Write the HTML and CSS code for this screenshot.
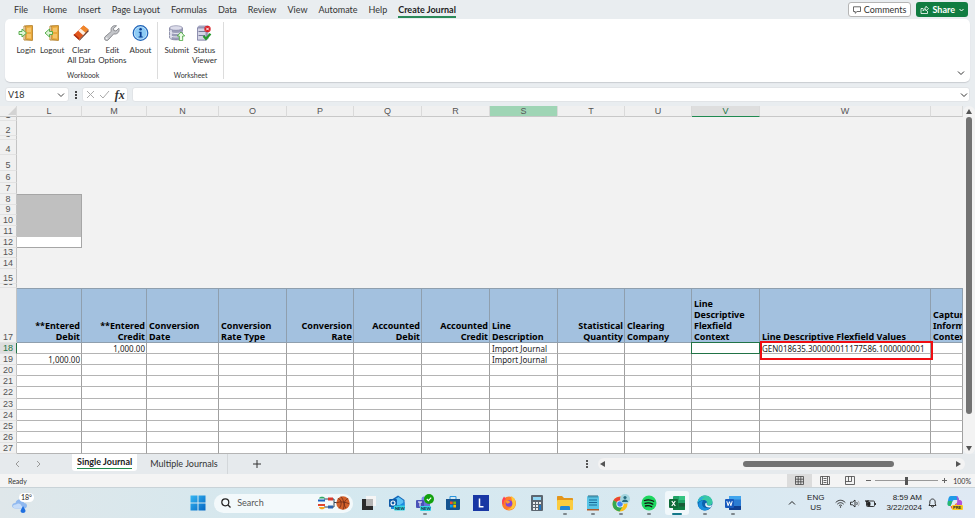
FILE: index.html
```
<!DOCTYPE html>
<html lang="en">
<head>
    <meta charset="UTF-8">
    <meta name="viewport" content="width=device-width, initial-scale=1.0">
    <title>Create Journal - Excel</title>
    <link rel="stylesheet" href="styles.css">
</head>
<body>
    <header class="menu-bar">
        <nav class="menu">
            <a href="#" class="file">File</a>
            <a href="#">Home</a>
            <a href="#">Insert</a>
            <a href="#">Page Layout</a>
            <a href="#">Formulas</a>
            <a href="#">Data</a>
            <a href="#">Review</a>
            <a href="#">View</a>
            <a href="#">Automate</a>
            <a href="#">Help</a>
            <a href="#" class="active">Create Journal</a>
        </nav>
        <div class="menu-actions">
            <button class="comments">
                <svg width="8" height="8" viewBox="0 0 8 8" fill="none" stroke="#444"><path d="M.5.8h7v4.700H4L2.200 7.300V5.500H.5z" stroke-width=".8"/></svg>
                Comments
            </button>
            <button class="share">
                <svg width="9" height="9" viewBox="0 0 9 9" fill="none" stroke="#fff" stroke-width=".8"><path d="M3 3.500H1v5h6.500V6M3 6c0-2 1-3 3-3V1.200L8.500 3.700 6 6V4.500C4.500 4.500 3.700 5 3 6z"/></svg>
                Share
                <svg class="share-arrow" width="5" height="4" viewBox="0 0 5 4" fill="none" stroke="#fff"><path d="M.5 1l2 2 2-2"/></svg>
            </button>
        </div>
    </header>

    <section class="ribbon">
        <div class="group">
            <div class="tools">
                <button>
                    <svg width="16" height="16" viewBox="0 0 16 16"><path d="M6 1h8v14H6z" fill="#fff" stroke="#b9852c"/><path d="M7.500 1L14.500.5v15l-7-1.200z" fill="#e9a93c" stroke="#a8741f" stroke-width=".6"/><path d="M9 3l4-.4v4.500H9zM9 9h4v4.500l-4-.6z" fill="#f5c469"/><path d="M1 6.500h3V4l4.500 4L4 12V9.500H1z" fill="#dff5d8" stroke="#4aa83f" stroke-width=".9"/></svg>
                    <span>Login</span>
                </button>
                <button>
                    <svg width="16" height="16" viewBox="0 0 16 16"><path d="M6 1h8v14H6z" fill="#fff" stroke="#b9852c"/><path d="M7.500 1L14.500.5v15l-7-1.200z" fill="#e9a93c" stroke="#a8741f" stroke-width=".6"/><path d="M9 3l4-.4v4.500H9zM9 9h4v4.500l-4-.6z" fill="#f5c469"/><path d="M8.500 6.500h-3V4L1 8l4.500 4V9.500h3z" fill="#dff5d8" stroke="#4aa83f" stroke-width=".9"/></svg>
                    <span>Logout</span>
                </button>
                <button>
                    <svg width="16" height="16" viewBox="0 0 16 16"><path d="M.5 10L10.500.5l5 4L6 15z" fill="#e2571c"/><path d="M10.500.5l5 4-3.500 3.700-5-4.300z" fill="#f0862a"/><path d="M7.500 3.500l5 4.300-2.300 2.500-5-4.500z" fill="#fff0e0"/><path d="M.5 10l5.500 5v-2L1.500 9z" fill="#a92c10"/><path d="M6 15l9.500-10.500v2L6.500 15.800z" fill="#6a3b2c"/></svg>
                    <span>Clear<br>All Data</span>
                </button>
                <button>
                    <svg width="16" height="16" viewBox="0 0 16 16"><path d="M14.800 3.200L12 6 9.800 5.500 9.500 3.500 12.500.8C10 0 7.200 1.600 7 4.500c0 .8.100 1.300.3 1.800L1 11.800c-1 1-.6 2.500.2 3.200.9.800 2.200.8 3-.1L9.700 8.900c3.500.9 6.400-2.300 5.100-5.700z" fill="#c3c5c9" stroke="#77797e" stroke-width=".8"/><circle cx="2.800" cy="13.200" r=".8" fill="#fff"/></svg>
                    <span>Edit<br>Options</span>
                </button>
                <button>
                    <svg width="17" height="16" viewBox="0 0 17 16"><circle cx="8.500" cy="8" r="7.300" fill="#cfeafc" stroke="#1c62b8" stroke-width="1.200"/><circle cx="8.500" cy="8" r="6" fill="#8dcbf5"/><circle cx="8.600" cy="4.300" r="1.300" fill="#0b3f96"/><path d="M6.800 6.700h2.800v4.800h1.200v1H6.600v-1h1.200V7.700h-1z" fill="#0b3f96"/></svg>
                    <span>About</span>
                </button>
            </div>
            <div class="group-name">Workbook</div>
        </div>
        <div class="group">
            <div class="tools">
                <button>
                    <svg width="16" height="16" viewBox="0 0 16 16"><path d="M.5 3v9.500c0 3.200 13 3.200 13 0V3z" fill="#9a9cb8" stroke="#6c6e8f" stroke-width=".6"/><path d="M2 4.500v9" stroke="#d6d7e6" stroke-width="2"/><ellipse cx="7" cy="3" rx="6.500" ry="2.300" fill="#dcdcea" stroke="#77799a" stroke-width=".6"/><path d="M.5 6.500c1 2.600 12 2.600 13 0M.5 10c1 2.600 12 2.600 13 0" fill="none" stroke="#e9e9f3"/><path d="M12 7l3.700 4h-2v4.600h-3.400V11h-2z" fill="#eafbe4" stroke="#3fa235" stroke-width=".8"/></svg>
                    <span>Submit</span>
                </button>
                <button>
                    <svg width="16" height="16" viewBox="0 0 16 16"><path d="M1 2.500L3 .5h9.500v13l-2 2H1z" fill="#a4a6c2"/><path d="M1.500 3h8.500v12H1.500z" fill="#d4d5e6" stroke="#7b7da0" stroke-width=".7"/><path d="M2.500 6.500h6.500M2.500 10.500h6.500" stroke="#77799a"/><circle cx="11.500" cy="4" r="3.200" fill="#d8232a"/><path d="M10.200 2.700l2.600 2.600m0-2.600l-2.600 2.600" stroke="#fff"/><path d="M7.500 11l2.500 2.800 4.500-5" fill="none" stroke="#26982c" stroke-width="2.200"/></svg>
                    <span>Status<br>Viewer</span>
                </button>
            </div>
            <div class="group-name">Worksheet</div>
        </div>
        <button class="collapse" aria-label="Collapse ribbon"><svg width="8" height="6" viewBox="0 0 8 6" fill="none" stroke="#333"><path d="M1 1.500l3 3 3-3"/></svg></button>
    </section>

    <section class="formula-bar">
        <div class="name-box">
            <input type="text" value="V18" aria-label="Name box">
            <svg width="8" height="6" viewBox="0 0 8 6" fill="none" stroke="#444"><path d="M1 1.500l3 3 3-3"/></svg>
        </div>
        <svg class="grip" width="2" height="8" viewBox="0 0 2 8" fill="#444"><path d="M0 0h2v2H0zM0 3h2v2H0zM0 6h2v2H0z"/></svg>
        <div class="formula-buttons">
            <button aria-label="Cancel"><svg width="9" height="9" viewBox="0 0 9 9" fill="none" stroke="#aaa"><path d="M1 1l7 7M8 1L1 8"/></svg></button>
            <button aria-label="Enter"><svg width="11" height="9" viewBox="0 0 11 9" fill="none" stroke="#aaa"><path d="M1 5l3 3 6-7"/></svg></button>
            <button class="fx">fx</button>
        </div>
        <div class="formula">
            <input type="text" aria-label="Formula">
            <svg width="8" height="6" viewBox="0 0 8 6" fill="none" stroke="#333"><path d="M1 1.500l3 3 3-3"/></svg>
        </div>
    </section>

    <main class="workspace">
        <div class="sheet">
            <table>
                <colgroup>
                    <col class="w-num"><col class="w-65"><col class="w-65"><col class="w-72"><col class="w-68"><col class="w-67"><col class="w-68"><col class="w-68"><col class="w-68"><col class="w-67"><col class="w-67"><col class="w-68"><col class="w-171"><col>
                </colgroup>
                <thead>
                    <tr>
                        <th class="corner"><svg width="8" height="8" viewBox="0 0 8 8"><path d="M8 0v8H0z" fill="#d3d3d3"/></svg></th>
                        <th>L</th><th>M</th><th>N</th><th>O</th><th>P</th><th>Q</th><th>R</th><th class="marked">S</th><th>T</th><th>U</th><th class="current">V</th><th>W</th><th></th>
                    </tr>
                </thead>
                <tbody class="top-rows">
                    <tr class="h-4"><th><div>1</div></th><td></td><td colspan="12"></td></tr>
                    <tr class="h-15 low"><th>2</th><td></td><td colspan="12"></td></tr>
                    <tr class="h-4"><th><div>3</div></th><td></td><td colspan="12"></td></tr>
                    <tr class="h-15 low"><th>4</th><td></td><td colspan="12"></td></tr>
                    <tr class="h-16 low"><th>5</th><td></td><td colspan="12"></td></tr>
                    <tr class="h-12 low"><th>6</th><td></td><td colspan="12"></td></tr>
                    <tr class="h-11"><th>7</th><td></td><td colspan="12"></td></tr>
                    <tr class="h-11"><th>8</th><td class="gray first"></td><td colspan="12"></td></tr>
                    <tr class="h-10"><th>9</th><td class="gray"></td><td colspan="12"></td></tr>
                    <tr class="h-11"><th>10</th><td class="gray"></td><td colspan="12"></td></tr>
                    <tr class="h-11"><th>11</th><td class="gray"></td><td colspan="12"></td></tr>
                    <tr class="h-11"><th>12</th><td class="white"></td><td colspan="12"></td></tr>
                    <tr class="h-10"><th>13</th><td></td><td colspan="12"></td></tr>
                    <tr class="h-11"><th>14</th><td></td><td colspan="12"></td></tr>
                    <tr class="h-15 low"><th>15</th><td></td><td colspan="12"></td></tr>
                    <tr class="h-4"><th><div>16</div></th><td></td><td colspan="12"></td></tr>
                </tbody>
                <tbody class="lines">
                    <tr class="titles">
                        <th>17</th>
                        <td class="num">**Entered<br>Debit</td>
                        <td class="num">**Entered<br>Credit</td>
                        <td>Conversion<br>Date</td>
                        <td>Conversion<br>Rate Type</td>
                        <td class="num">Conversion<br>Rate</td>
                        <td class="num">Accounted<br>Debit</td>
                        <td class="num">Accounted<br>Credit</td>
                        <td>Line<br>Description</td>
                        <td class="num">Statistical<br>Quantity</td>
                        <td>Clearing<br>Company</td>
                        <td>Line<br>Descriptive<br>Flexfield<br>Context</td>
                        <td>Line Descriptive Flexfield Values</td>
                        <td class="cut">Captured<br>Information<br>Context</td>
                    </tr>
                    <tr class="h-11"><th class="current">18</th><td></td><td class="num">1,000.00</td><td></td><td></td><td></td><td></td><td></td><td>Import Journal</td><td></td><td></td><td class="selected"></td><td class="boxed">GEN018635.300000011177586.1000000001</td><td></td></tr>
                    <tr class="h-11"><th>19</th><td class="num">1,000.00</td><td></td><td></td><td></td><td></td><td></td><td></td><td>Import Journal</td><td></td><td></td><td></td><td></td><td></td></tr>
                    <tr class="h-11"><th>20</th><td></td><td></td><td></td><td></td><td></td><td></td><td></td><td></td><td></td><td></td><td></td><td></td><td></td></tr>
                    <tr class="h-11"><th>21</th><td></td><td></td><td></td><td></td><td></td><td></td><td></td><td></td><td></td><td></td><td></td><td></td><td></td></tr>
                    <tr class="h-12"><th>22</th><td></td><td></td><td></td><td></td><td></td><td></td><td></td><td></td><td></td><td></td><td></td><td></td><td></td></tr>
                    <tr class="h-11"><th>23</th><td></td><td></td><td></td><td></td><td></td><td></td><td></td><td></td><td></td><td></td><td></td><td></td><td></td></tr>
                    <tr class="h-11"><th>24</th><td></td><td></td><td></td><td></td><td></td><td></td><td></td><td></td><td></td><td></td><td></td><td></td><td></td></tr>
                    <tr class="h-11"><th>25</th><td></td><td></td><td></td><td></td><td></td><td></td><td></td><td></td><td></td><td></td><td></td><td></td><td></td></tr>
                    <tr class="h-11"><th>26</th><td></td><td></td><td></td><td></td><td></td><td></td><td></td><td></td><td></td><td></td><td></td><td></td><td></td></tr>
                    <tr class="h-11"><th>27</th><td></td><td></td><td></td><td></td><td></td><td></td><td></td><td></td><td></td><td></td><td></td><td></td><td></td></tr>
                </tbody>
            </table>
        </div>
        <div class="v-scroll">
            <svg width="6" height="5" viewBox="0 0 6 5" fill="#555"><path d="M3 0l3 5H0z"/></svg>
            <div class="v-track"><div class="v-thumb"></div></div>
            <svg width="6" height="5" viewBox="0 0 6 5" fill="#555"><path d="M3 5L0 0h6z"/></svg>
        </div>
    </main>

    <section class="sheet-tabs">
        <div class="tab-nav">
            <button aria-label="Previous sheet"><svg width="5" height="8" viewBox="0 0 5 8" fill="none" stroke="#999"><path d="M4 1L1 4l3 3"/></svg></button>
            <button aria-label="Next sheet"><svg width="5" height="8" viewBox="0 0 5 8" fill="none" stroke="#999"><path d="M1 1l3 3-3 3"/></svg></button>
        </div>
        <button class="tab active"><span>Single Journal</span></button>
        <button class="tab">Multiple Journals</button>
        <button class="add" aria-label="New sheet"><svg width="8" height="8" viewBox="0 0 8 8" stroke="#333"><path d="M4 0v8M0 4h8"/></svg></button>
        <svg class="tab-grip" width="2" height="8" viewBox="0 0 2 8" fill="#555"><path d="M0 0h2v2H0zM0 3h2v2H0zM0 6h2v2H0z"/></svg>
        <div class="h-scroll">
            <svg width="5" height="6" viewBox="0 0 5 6" fill="#555"><path d="M5 0v6L0 3z"/></svg>
            <div class="h-track"><div class="h-thumb"></div></div>
            <svg width="5" height="6" viewBox="0 0 5 6" fill="#555"><path d="M0 0v6l5-3z"/></svg>
        </div>
    </section>

    <section class="status-bar">
        <span>Ready</span>
        <div class="views">
            <button class="active" aria-label="Normal view"><svg width="9" height="9" viewBox="0 0 9 9" fill="none" stroke="#444" stroke-width=".8"><path d="M.5.5h8v8h-8zM.5 3.200h8M.5 5.800h8M3.200.5v8M5.800.5v8"/></svg></button>
            <button aria-label="Page layout view"><svg width="10" height="9" viewBox="0 0 10 9" fill="none" stroke="#444" stroke-width=".8"><path d="M.5.5h9v8h-9zM2.500.5v8M7.500.5v8M3.500 2.500h3M3.500 4.500h3M3.500 6.500h3"/></svg></button>
            <button aria-label="Page break view"><svg width="10" height="9" viewBox="0 0 10 9" fill="none" stroke="#444" stroke-width=".8"><path d="M.5.5h9v8h-9zM.5 5.500h6v-5M3.500.5v5"/></svg></button>
        </div>
        <div class="zoom">
            <button aria-label="Zoom out"><svg width="5" height="5" viewBox="0 0 5 5" stroke="#666"><path d="M0 2.500h5"/></svg></button>
            <input type="range" min="0" max="100" value="50" aria-label="Zoom">
            <button aria-label="Zoom in"><svg width="5" height="5" viewBox="0 0 5 5" stroke="#666"><path d="M0 2.500h5M2.500 0v5"/></svg></button>
            <span class="percent">100%</span>
        </div>
    </section>

    <footer class="taskbar">
        <button class="weather" aria-label="Weather">
            <svg width="17" height="16" viewBox="0 0 17 16"><path d="M4 11.500c-5 0-5-5.500-.5-5.500 1-5 8-5 8.500 0 4 0 4 5.500 0 5.500z" fill="#8fb8ef"/><path d="M3 11.500c-3.500-1-2-4.500 1-4 2-2 5-1 5.500 1.500 2 .5 2 2 1 2.500z" fill="#c5dcf9"/><path d="M11 9l2.300 4c.8 2-.8 3-2.300 3s-3-1-2.200-3z" fill="#1e6fe0"/></svg>
            <span class="temp">18°</span>
        </button>
        <div class="apps">
            <button class="app" aria-label="Start"><svg width="16" height="16" viewBox="0 0 16 16"><defs><linearGradient id="win" x1="0" y1="0" x2="1" y2="1"><stop offset="0" stop-color="#35b6f2"/><stop offset="1" stop-color="#0567c3"/></linearGradient></defs><path d="M.5.5h7v7h-7zM8.500.5h7v7h-7zM.5 8.500h7v7h-7zM8.500 8.500h7v7h-7z" fill="url(#win)"/></svg></button>
            <label class="search">
                <svg width="10" height="10" viewBox="0 0 10 10" fill="none" stroke="#222" stroke-width="1.200"><circle cx="4.300" cy="4.300" r="3.500"/><path d="M7 7l2.500 2.500"/></svg>
                <input type="text" placeholder="Search" aria-label="Search">
                <svg width="32" height="16" viewBox="0 0 32 16"><path d="M6 4h10v3.500h3M6 12h10V7.500" fill="none" stroke="#345" stroke-width="1"/><path d="M1 3.500C1 1 7 1 7 3.500z" fill="#2fa866"/><path d="M0 4.500h7v2H0z" fill="#1c63c0"/><path d="M0 9h7v2H0z" fill="#e2472f"/><path d="M1 12h6c0 3-6 3-6 0z" fill="#f4a51d"/><path d="M10 2.500h5v3h-5z" fill="#d83a2e"/><path d="M10 10.500h5v3h-5z" fill="#2a62ac"/><circle cx="25" cy="8" r="6.700" fill="#d2602a"/><path d="M18.500 8c4-2 9-1 13 1M23 1.500c3 4 4 9 2 13M20 3.500c4 1 4 7 1 10M30 3.500c-4 2-5 6-2 9.500" fill="none" stroke="#602516" stroke-width=".7"/></svg>
            </label>
            <button class="app" aria-label="Task view"><svg width="16" height="16" viewBox="0 0 16 16"><path d="M5 1h10v10H5z" fill="#f5f5f5"/><path d="M1 4h11v11H1z" fill="#2b2b2b"/><path d="M5 4h7v7H5z" fill="#b4b4b4"/></svg></button>
            <button class="app" aria-label="Outlook"><svg width="16" height="16" viewBox="0 0 16 16"><path d="M2 5l7-4.500L15.500 5v9H2z" fill="#1267b8"/><path d="M4 5.500L9.500 2l5 3.500V10H4z" fill="#5cc2f5"/><path d="M2 8l7 3 6.500-4v7H2z" fill="#1b8ae0"/><rect y="4" width="8" height="8" rx="1" fill="#0f5ba8"/><circle cx="4" cy="8" r="2" fill="none" stroke="#fff" stroke-width="1.100"/><rect x="5" y="10.500" width="11" height="5" rx="1" fill="#35d6e5"/><text class="badge-new" x="6" y="14.500">NEW</text></svg></button>
            <button class="app running" aria-label="Teams"><svg width="18" height="18" viewBox="0 0 18 18"><circle cx="8" cy="5" r="2.500" fill="#7b83eb"/><rect x="5" y="7" width="9" height="8" rx="2" fill="#6a72d8"/><rect x="0" y="6" width="8" height="8" rx="1" fill="#4a52b8"/><path d="M2 8h4M4 8v4.500" stroke="#fff"/><rect x="4" y="12" width="11" height="5" rx="1" fill="#35d6e5"/><text class="badge-new" x="5" y="16">NEW</text><circle cx="13" cy="5" r="5" fill="#13a10e"/><path d="M10.800 5l1.600 1.600 2.800-3" fill="none" stroke="#fff" stroke-width="1.100"/></svg></button>
            <button class="app" aria-label="Store"><svg width="16" height="16" viewBox="0 0 16 16"><path d="M5 4V1.500h6V4" fill="none" stroke="#2b95dd"/><path d="M1 4h14v9.500c0 1-.7 1.500-1.500 1.500h-11C1.500 15 1 14.500 1 13.500z" fill="#14538f"/><path d="M5 6.500h2.700v2.700H5z" fill="#f25022"/><path d="M8.300 6.500H11v2.700H8.300z" fill="#7fba00"/><path d="M5 9.800h2.700v2.700H5z" fill="#00a4ef"/><path d="M8.300 9.800H11v2.700H8.300z" fill="#ffb900"/></svg></button>
            <button class="app" aria-label="Ledger"><svg width="16" height="16" viewBox="0 0 16 16"><path d="M0 0h16v16H0z" fill="#1937a4"/><path d="M6.500 3.500v8.300h4" fill="none" stroke="#fff" stroke-width="1.500"/></svg></button>
            <button class="app" aria-label="Firefox"><svg width="16" height="16" viewBox="0 0 16 16"><circle cx="8" cy="8.500" r="7" fill="#ff7a2b"/><path d="M10 1c5 2 6 8 3 12-2 2-5 2-7 1 5 0 6-4 5-8z" fill="#ffc83a"/><path d="M1.500 4L3 1.500 5 4c-2 1-3 3-2 6-2-1-2.500-3-1.500-6z" fill="#ff4055"/><circle cx="8" cy="8.500" r="3.300" fill="#8046d8"/><path d="M5 6c2-1 4 0 4 1.500L7 8.500C6 9 5 8 5 6z" fill="#ff9b2d"/></svg></button>
            <button class="app" aria-label="Calculator"><svg width="16" height="16" viewBox="0 0 16 16"><rect x="2" width="12" height="16" rx="1" fill="#5c6670"/><path d="M4 2h8v3H4z" fill="#8fd6f5"/><path d="M4 7h2v2H4zM7 7h2v2H7zM4 10h2v2H4zM7 10h2v2H7zM4 13h2v2H4zM7 13h2v2H7zM10 7h2v2h-2z" fill="#e8ecef"/><path d="M10 10h2v5h-2z" fill="#1e78c8"/></svg></button>
            <button class="app running" aria-label="File Explorer"><svg width="16" height="16" viewBox="0 0 16 16"><path d="M0 2c0-.6.4-1 1-1h4l2 2h8c.6 0 1 .4 1 1v5H0z" fill="#e3961a"/><rect y="5" width="16" height="10" rx="1" fill="#fbcc3f"/><path d="M3 15v-2.500c0-1 .5-1.500 1.500-1.500h7c1 0 1.500.5 1.500 1.500V15z" fill="#2387d4"/></svg></button>
            <button class="app running" aria-label="Notepad"><svg width="16" height="16" viewBox="0 0 16 16"><rect x="2" y="1" width="12" height="14" rx="1" fill="#59c5e6"/><path d="M2 14h12v1.500H2z" fill="#b05a2b"/><path d="M4 5h8M4 7.500h8M4 10h8" stroke="#176a98"/><path d="M4 0v2.500M6 0v2.500M8 0v2.500M10 0v2.500M12 0v2.500" stroke="#29647d"/></svg></button>
            <button class="app running" aria-label="Chrome"><svg width="18" height="18" viewBox="0 0 18 18"><circle cx="8" cy="10" r="7.500" fill="#fbc11c"/><path d="M8 10L1.500 6.200C4 2 11 1 14.500 6.200H8z" fill="#ea4335"/><path d="M8 10L1.500 6.200c-2.500 5 .5 10.800 6 11.300L11 12z" fill="#34a853"/><circle cx="8" cy="10" r="3.600" fill="#fff"/><circle cx="8" cy="10" r="2.800" fill="#4285f4"/><circle cx="13" cy="5" r="5" fill="#a4d5df"/><circle cx="13" cy="3.500" r="1.600" fill="#256c80"/><path d="M10 8c0-3.500 6-3.500 6 0z" fill="#256c80"/></svg></button>
            <button class="app running" aria-label="Spotify"><svg width="16" height="16" viewBox="0 0 16 16"><circle cx="8" cy="8" r="7.500" fill="#1ed760"/><path d="M3.500 5.500c3-1 6.500-.7 9.200.8M4 8.300c2.800-.8 5.500-.5 7.800.8M4.500 11c2.300-.6 4.500-.3 6.300.7" fill="none" stroke="#111" stroke-width="1.300" stroke-linecap="round"/></svg></button>
            <button class="app running current" aria-label="Excel"><svg width="16" height="16" viewBox="0 0 16 16"><rect x="4" y="1" width="12" height="14" rx="1" fill="#21a366"/><path d="M10 1h5c.6 0 1 .4 1 1v3h-6z" fill="#33c481"/><path d="M4 8h12v6c0 .6-.4 1-1 1H5c-.6 0-1-.4-1-1z" fill="#107c41"/><path d="M10 8h6v3.500h-6z" fill="#185c37"/><rect y="4" width="9" height="9" rx="1" fill="#0f6b38"/><path d="M2.800 6l3.500 5M6.300 6l-3.500 5" stroke="#fff" stroke-width="1.200"/></svg></button>
            <button class="app running" aria-label="Edge"><svg width="16" height="16" viewBox="0 0 16 16"><circle cx="8" cy="8" r="7.500" fill="#0c62ad"/><path d="M.5 8C1 2 5 .5 8 .5c5 0 7.500 3.500 7.500 6.500 0 4-5 4-5.500 2.500C11 7 9 5 6.500 5 3.500 5 1.500 6.500.5 8z" fill="#38c9a4"/><path d="M.5 8C1 4 4 1.500 8 2c-2 .5-3 1.500-3.500 3C2.500 5.500 1.500 6.500.5 8z" fill="#2aa8e4"/><path d="M5 8.500c0 4 3.500 5.500 8.500 4-3 4-10 4-12-1-1-4 2-6 5-6C5.500 6 5 7 5 8.500z" fill="#1b8fdd"/><path d="M9.500 7.500c.5 1 0 2 .5 2.500 1 1 3 1 5 0-.3 1-1 2-1.500 2.500-3 .5-5.500-1-5.300-3 0-1 .5-1.500 1.300-2z" fill="#eaf6fb"/></svg></button>
            <button class="app running" aria-label="Word"><svg width="16" height="16" viewBox="0 0 16 16"><rect x="4" y="1" width="12" height="14" rx="1" fill="#2b7cd3"/><path d="M4 2c0-.6.4-1 1-1h10c.6 0 1 .4 1 1v2.500H4z" fill="#41a5ee"/><path d="M4 11h12v3c0 .6-.4 1-1 1H5c-.6 0-1-.4-1-1z" fill="#103f91"/><rect y="4" width="9" height="9" rx="1" fill="#185abd"/><path d="M1.800 6.200l1.300 4.500 1.400-4 1.400 4 1.300-4.500" fill="none" stroke="#fff"/></svg></button>
        </div>
        <div class="tray">
            <svg width="8" height="6" viewBox="0 0 8 6" fill="none" stroke="#222"><path d="M1 4.500l3-3 3 3"/></svg>
            <div class="lang">ENG<br>US</div>
            <div class="net">
                <svg width="11" height="9" viewBox="0 0 11 9" fill="none" stroke="#222" stroke-width=".9"><path d="M.7 3.500c3-3 6.600-3 9.600 0M2.300 5.200c2-2 4.400-2 6.400 0M3.900 6.800c1-1 2.200-1 3.200 0"/><circle cx="5.500" cy="8" r=".7" fill="#222" stroke="none"/></svg>
                <svg width="11" height="9" viewBox="0 0 11 9" fill="none" stroke="#222" stroke-width=".9"><path d="M.5 3.200h2L5 1v7L2.500 5.800h-2zM6.500 3c.9.9.9 2.100 0 3"/><path d="M8 1.800c1.500 1.500 1.500 3.900 0 5.400" stroke="#aaa"/></svg>
                <svg width="11" height="9" viewBox="0 0 11 9" fill="none" stroke="#222" stroke-width=".9"><rect x="1.500" y="2" width="8" height="5.500" rx="1"/><path d="M10.500 4v2"/><path d="M2.500 3.500h2.500v3H2.500z" fill="#222"/><path d="M.5 2.500h3M1 1v2M3 1v2" stroke-width="1.200"/></svg>
            </div>
            <div class="clock">8:59 AM<br>3/22/2024</div>
            <svg class="bell" width="9" height="10" viewBox="0 0 9 10" fill="none" stroke="#222" stroke-width=".9"><path d="M1 7.500l.8-1.700V4c0-4 5.400-4 5.400 0v1.800L8 7.500zM3.300 8c.3 1.500 2.100 1.500 2.400 0"/></svg>
            <svg class="copilot" width="16" height="16" viewBox="0 0 16 16"><path d="M4 1h5c2 0 2.500 2 3 4H7C5 5 5 9 3.500 11 0 11 .5 8 1 5.500 1.500 3 2 1 4 1z" fill="#1f9be8"/><path d="M9 1c2 0 2.500 2 3 4 3 0 3.500 2 3 4.500-.5 3-1.500 4.500-4 4.500H7c2 0 2.500-3 3-6 .4-2 .5-6-1-7z" fill="#b353d8"/><path d="M1 6l-.5 3C.5 11 2 11 3.500 11l2-5z" fill="#28b870"/><path d="M10 8c-.5 3-1 6-4 6-2 0-2-1.500-2.500-3h3C8 11 8 8 10 8z" fill="#f0693a"/><rect x="5" y="10" width="11" height="5" rx="1" fill="#ffcb1f"/><text class="badge-new" x="6" y="14">PRE</text></svg>
        </div>
    </footer>
</body>
</html>
```

FILE: styles.css
```
* {
    box-sizing: border-box;
}
body {
    margin: 0;
    min-height: 100vh;
    display: flex;
    flex-direction: column;
    background: #e9edf0;
    color: #333;
    font-family: Lato, "Open Sans", sans-serif;
    font-size: 9px;
    line-height: 10px;
}
button, input {
    font: inherit;
    color: inherit;
    border: none;
    background: none;
    padding: 0;
    margin: 0;
    min-width: 0;
}
button {
    cursor: pointer;
}
a {
    color: inherit;
    text-decoration: none;
}
svg {
    display: block;
    flex: none;
}

/* menu */
.menu-bar {
    display: flex;
    justify-content: space-between;
    align-items: center;
    height: 19px;
    padding: 0 7px 0 14px;
}
.menu {
    display: flex;
    gap: 11px;
    padding-top: 2px;
}
.menu a {
    height: 14px;
    line-height: 12px;
    white-space: nowrap;
}
.menu .file {
    margin-right: 4px;
}
.menu .active {
    font-weight: bold;
    color: #222;
    border-bottom: 2px solid #2b8a5a;
}
.menu-actions {
    display: flex;
    gap: 5px;
}
.menu-actions button {
    display: flex;
    align-items: center;
    gap: 3px;
    height: 15px;
    padding: 0 4px;
    border-radius: 3px;
}
.comments {
    background: #fff;
    border: 1px solid #b5b5b5;
}
.share {
    background: #107c41;
    color: #fff;
    font-weight: bold;
}
.share-arrow {
    margin-left: 1px;
}

/* ribbon */
.ribbon {
    display: flex;
    position: relative;
    height: 63px;
    margin: 0 5px;
    padding: 3px 0;
    background: #fff;
    border-radius: 5px;
    box-shadow: 0 1px 1px #c9cdd1;
    font-size: 8px;
}
.group {
    display: flex;
    flex-direction: column;
    justify-content: space-between;
    padding: 0 6px;
    border-right: 1px solid #dcdcdc;
}
.group:first-child {
    padding-left: 10px;
}
.tools {
    display: flex;
    gap: 3px;
    padding-top: 3px;
}
.tools button {
    display: flex;
    flex-direction: column;
    align-items: center;
    gap: 4px;
    min-width: 22px;
    white-space: nowrap;
}
.group-name {
    font-size: 7px;
    line-height: 8px;
    text-align: center;
}
.collapse {
    position: absolute;
    right: 5px;
    bottom: 6px;
}

/* formula bar */
.formula-bar {
    display: flex;
    align-items: center;
    gap: 4px;
    margin: 5px 5px 4px;
    height: 15px;
}
.name-box, .formula, .formula-buttons {
    display: flex;
    align-items: center;
    height: 15px;
    background: #fff;
    border: 1px solid #e1e4e7;
    border-radius: 3px;
}
.name-box {
    width: 64px;
    padding: 0 3px 0 2px;
}
.name-box input, .formula input {
    flex: 1;
    width: 0;
}
.grip {
    margin: 0 1px 0 2px;
}
.formula-buttons {
    gap: 5px;
    width: 46px;
    padding: 0 3px;
}
.fx {
    font-family: "Liberation Serif", serif;
    font-size: 12px;
    font-style: italic;
    font-weight: bold;
}
.formula {
    flex: 1;
    padding: 0 1px;
}

/* grid */
.workspace {
    display: flex;
    flex: 1;
}
.sheet {
    flex: 1;
    min-width: 0;
    overflow: hidden;
}
table {
    width: 100%;
    table-layout: fixed;
    border-collapse: separate;
    border-spacing: 0;
    font-family: "Noto Sans", "Open Sans", sans-serif;
    font-size: 8px;
}
.w-num { width: 17px; }
.w-65 { width: 65px; }
.w-67 { width: 67px; }
.w-68 { width: 68px; }
.w-72 { width: 72px; }
.w-171 { width: 171px; }
.h-4 { height: 4px; }
.h-10 { height: 10px; }
.h-11 { height: 11px; }
.h-12 { height: 12px; }
.h-15 { height: 15px; }
.h-16 { height: 16px; }
th, td {
    padding: 0;
    line-height: 9px;
}
th {
    background: #f0f0f0;
    border-right: 1px solid #dadada;
    color: #555;
    font-family: "Liberation Sans", sans-serif;
    font-size: 9px;
    font-weight: normal;
}
thead th {
    height: 11px;
    border-bottom: 1px solid #c8c8c8;
}
.corner svg {
    margin-left: 8px;
}
thead .marked {
    background: #9fd5b5;
}
thead .current {
    background: #dedede;
    border-bottom-color: #1f8a50;
    color: #217346;
}
tbody th {
    border-right-color: #c4c4c4;
    border-bottom: 1px solid #e2e2e2;
}
.h-4 th div {
    display: flex;
    align-items: flex-end;
    justify-content: center;
    height: 3px;
    overflow: hidden;
}
.top-rows td {
    background: #f2f2f2;
}
.top-rows .gray {
    background: #c0c0c0;
    border-right: 1px solid #a6a6a6;
}
.top-rows .first {
    border-top: 1px solid #a6a6a6;
}
.top-rows .white {
    background: #fff;
    border-right: 1px solid #a6a6a6;
    border-bottom: 1px solid #a6a6a6;
}
.low th {
    vertical-align: bottom;
}
.lines td {
    background: #fff;
    border-right: 1px solid #a0a0a0;
    border-bottom: 1px solid #b4b4b4;
    padding: 0 1px 0 2px;
    color: #222;
    white-space: nowrap;
}
.lines .num {
    text-align: right;
}
.titles {
    height: 55px;
}
.lines .titles td {
    background: #a3c1df;
    border-top: 1px solid #8f9fae;
    border-color: #8f9fae;
    color: #000;
    font-size: 9px;
    font-weight: bold;
    line-height: 11px;
    vertical-align: bottom;
}
.titles th {
    vertical-align: bottom;
}
.lines .cut {
    overflow: hidden;
}
tbody .current {
    background: #dedede;
    border-right: 1px solid #217346;
    color: #217346;
}
.selected, .boxed {
    position: relative;
}
.selected::after {
    content: "";
    position: absolute;
    inset: -1px;
    border: 1px solid #217346;
}
.boxed::after {
    content: "";
    position: absolute;
    inset: -2px -3px -7px 0;
    border: 2px solid #f00d12;
    z-index: 1;
}
.v-scroll {
    display: flex;
    flex-direction: column;
    align-items: center;
    gap: 3px;
    width: 12px;
    padding: 3px 0;
    background: #f3f3f3;
    border-radius: 6px;
}
.v-track {
    flex: 1;
    width: 6px;
}
.v-thumb {
    height: 91%;
    background: #737373;
    border-radius: 3px;
}

/* sheet tabs */
.sheet-tabs {
    display: flex;
    align-items: center;
    height: 20px;
    padding-right: 10px;
    background: #e6eaed;
}
.tab-nav {
    display: flex;
    gap: 16px;
    width: 72px;
    padding-left: 15px;
}
.tab {
    height: 20px;
    padding: 0 9px;
    border-right: 1px solid #d3d7da;
    white-space: nowrap;
}
.tab.active {
    align-self: flex-start;
    height: 17px;
    margin-right: 4px;
    padding: 0 5px;
    background: #fff;
    border: none;
    border-radius: 0 0 3px 3px;
    font-weight: bold;
    color: #222;
}
.tab.active span {
    display: block;
    line-height: 12px;
    border-bottom: 1px solid #1f8a4c;
}
.add {
    margin-left: 25px;
}
.tab-grip {
    margin-left: auto;
    margin-right: 10px;
}
.h-scroll {
    display: flex;
    align-items: center;
    gap: 4px;
    width: 38%;
    height: 12px;
    padding: 0 4px 0 2px;
    background: #f3f3f3;
    border-radius: 6px;
}
.h-track {
    flex: 1;
    height: 6px;
}
.h-thumb {
    width: 44%;
    height: 6px;
    margin-left: 39%;
    background: #737373;
    border-radius: 3px;
}

/* status bar */
.status-bar {
    display: flex;
    align-items: center;
    height: 14px;
    padding: 0 4px 0 8px;
    background: #f4f4f4;
    border-bottom: 1px solid #c9d3d8;
    font-size: 7px;
}
.views {
    display: flex;
    margin-left: auto;
}
.views button {
    display: flex;
    align-items: center;
    justify-content: center;
    width: 25px;
    height: 13px;
}
.views .active {
    background: #dcdcdc;
}
.zoom {
    display: flex;
    align-items: center;
    gap: 4px;
    margin-left: 4px;
}
.zoom input {
    appearance: none;
    width: 63px;
    height: 8px;
    background: linear-gradient(#999, #999) center / 100% 1px no-repeat;
}
.zoom input::-webkit-slider-thumb {
    appearance: none;
    width: 3px;
    height: 8px;
    background: #555;
}
.percent {
    margin-left: 2px;
}

/* taskbar */
.taskbar {
    display: flex;
    align-items: center;
    height: 30px;
    padding: 0 12px;
    background: linear-gradient(90deg, #dfe7ea, #d4e8ef 30%, #d9e9f1 75%, #dfe9f4);
    color: #222;
    font-size: 8px;
}
.weather {
    display: flex;
    position: relative;
    width: 22px;
    height: 20px;
    align-items: flex-end;
}
.temp {
    position: absolute;
    top: 0;
    right: 0;
    padding: 0 2px;
    background: #fff;
    border-radius: 5px;
    font-size: 7px;
    line-height: 9px;
}
.apps {
    display: flex;
    align-items: center;
    gap: 4px;
    margin-left: 16%;
}
.app {
    display: flex;
    position: relative;
    align-items: center;
    justify-content: center;
    width: 24px;
    height: 24px;
    border-radius: 3px;
}
.app.running::after {
    content: "";
    position: absolute;
    bottom: 0;
    left: 10px;
    width: 4px;
    height: 2px;
    border-radius: 1px;
    background: #7d868b;
}
.app.current {
    background: #f1f8fb;
}
.app.current::after {
    left: 7px;
    width: 10px;
    background: #14788a;
}
.badge-new {
    font-size: 4px;
    font-weight: bold;
    fill: #123;
}
.search {
    display: flex;
    align-items: center;
    gap: 6px;
    width: 139px;
    height: 19px;
    padding: 0 3px 0 7px;
    background: #f3f9fb;
    border-radius: 10px;
    font-size: 9px;
}
.search input {
    flex: 1;
    width: 0;
}
.search input::placeholder {
    color: #555;
    opacity: 1;
}
.tray {
    display: flex;
    align-items: center;
    gap: 6px;
    margin-left: auto;
    font-family: "Liberation Sans", sans-serif;
}
.lang {
    padding: 0 5px;
    text-align: center;
}
.net {
    display: flex;
    gap: 4px;
}
.clock {
    padding-left: 4px;
    text-align: right;
}
.copilot {
    margin-left: 4px;
}
```
